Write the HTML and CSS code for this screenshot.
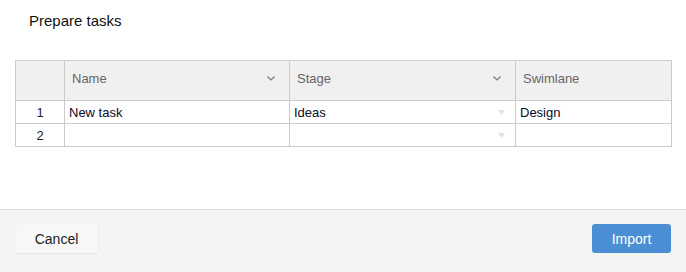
FILE: index.html
```html
<!DOCTYPE html>
<html lang="en">
<head>
    <meta charset="UTF-8">
    <title>Prepare tasks</title>
    <link rel="stylesheet" href="styles.css">
</head>
<body>
    <div class="dialog">
        <div class="dialog-body">
            <h1 class="title">Prepare tasks</h1>
            <table class="grid">
                <colgroup>
                    <col class="col-num">
                    <col class="col-name">
                    <col class="col-stage">
                    <col class="col-lane">
                </colgroup>
                <thead>
                    <tr>
                        <th></th>
                        <th>
                            <div class="head-cell">
                                <span>Name</span>
                                <svg class="chevron" width="8" height="5" viewBox="0 0 8 5"><polyline points="0.5,0.5 4,4 7.5,0.5" /></svg>
                            </div>
                        </th>
                        <th>
                            <div class="head-cell">
                                <span>Stage</span>
                                <svg class="chevron" width="8" height="5" viewBox="0 0 8 5"><polyline points="0.5,0.5 4,4 7.5,0.5" /></svg>
                            </div>
                        </th>
                        <th>
                            <div class="head-cell">
                                <span>Swimlane</span>
                            </div>
                        </th>
                    </tr>
                </thead>
                <tbody>
                    <tr>
                        <td class="num">1</td>
                        <td>New task</td>
                        <td>
                            <div class="select-cell">
                                <span>Ideas</span>
                                <svg class="caret" width="7" height="5" viewBox="0 0 7 5"><polygon points="0,0 7,0 3.5,5" /></svg>
                            </div>
                        </td>
                        <td>Design</td>
                    </tr>
                    <tr>
                        <td class="num">2</td>
                        <td></td>
                        <td>
                            <div class="select-cell">
                                <span></span>
                                <svg class="caret" width="7" height="5" viewBox="0 0 7 5"><polygon points="0,0 7,0 3.5,5" /></svg>
                            </div>
                        </td>
                        <td></td>
                    </tr>
                </tbody>
            </table>
        </div>
        <div class="dialog-footer">
            <button class="btn btn-cancel">Cancel</button>
            <button class="btn btn-import">Import</button>
        </div>
    </div>
</body>
</html>
```

FILE: styles.css
```css
body {
    margin: 0;
    font-family: 'Liberation Sans', Arial, sans-serif;
    background-color: #ffffff;
    color: #000;
}

.dialog {
    width: 686px;
    height: 272px;
    display: flex;
    flex-direction: column;
}

.dialog-body {
    height: 209px;
    padding: 12px 15px 0 15px;
    box-sizing: border-box;
}

.title {
    margin: 0 0 30px 14px;
    font-size: 15px;
    font-weight: normal;
    line-height: 18px;
    color: #111;
}

.grid {
    border-collapse: collapse;
    table-layout: fixed;
    width: 656px;
    font-size: 13px;
}

.col-num { width: 49px; }
.col-name { width: 225px; }
.col-stage { width: 226px; }
.col-lane { width: 156px; }

.grid th,
.grid td {
    border: 1px solid #cccccc;
    padding: 0;
}

.grid th {
    height: 39px;
    background-color: #f0f0f0;
    font-weight: normal;
    color: #666;
    text-align: left;
}

.head-cell {
    display: flex;
    align-items: center;
    justify-content: space-between;
    padding: 0 14px 4px 7px;
}

.chevron polyline {
    fill: none;
    stroke: #777;
    stroke-width: 1.2;
}

.grid td {
    height: 22px;
    padding: 0 4px;
    color: #0a0a1e;
}

.grid td.num {
    text-align: center;
    color: #222;
}

.select-cell {
    display: flex;
    align-items: center;
    justify-content: space-between;
    padding-right: 6px;
}

.caret polygon {
    fill: #e2e2e2;
}

.dialog-footer {
    flex: 1;
    background-color: #f4f4f4;
    border-top: 1px solid #dddddd;
    display: flex;
    justify-content: space-between;
    align-items: flex-start;
    padding: 14px 15px 0 15px;
}

.btn {
    height: 29px;
    font-family: 'Liberation Sans', Arial, sans-serif;
    font-size: 14px;
    border: none;
    border-radius: 3px;
    cursor: pointer;
}

.btn-cancel {
    width: 83px;
    background-color: #f7f7f7;
    color: #222;
    box-shadow: 0 1px 2px rgba(0, 0, 0, 0.08);
}

.btn-import {
    width: 79px;
    background-color: #4a8fd4;
    color: #ffffff;
}
```
